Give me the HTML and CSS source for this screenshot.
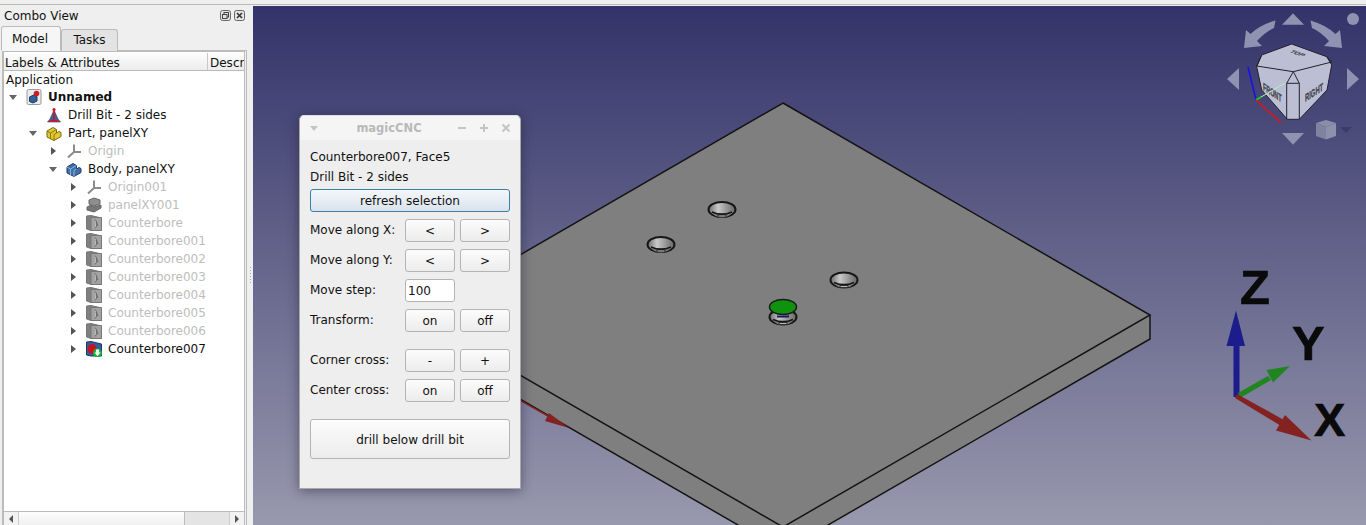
FILE: index.html
```html
<!DOCTYPE html>
<html lang="en">
<head>
<meta charset="UTF-8">
<meta name="viewport" content="width=device-width, initial-scale=1.0">
<title>magicCNC</title>
<link rel="stylesheet" href="styles.css">
</head>
<body>
  <svg class="defs" width="0" height="0">
    <defs>
      <symbol id="i-origin" viewBox="0 0 16 16">
        <path d="M8 1.5V9M8 9L2 14.5M8 9H15" fill="none" stroke="currentColor" stroke-width="2"/>
      </symbol>
      <symbol id="i-body" viewBox="0 0 16 16">
        <path d="M1 6L7 2.5L10.5 4.5V8L13 6.5L15 7.5V11.5L8 15.5L1 12Z" fill="#3f6ea8" stroke="#1f3f66"/>
        <path d="M1 6L4.5 8L10.5 4.5M4.5 8V14M10.5 8L8 9.5V15.5" fill="none" stroke="#8fb4dc"/>
      </symbol>
      <symbol id="i-part" viewBox="0 0 16 16">
        <path d="M1 6L7 2.5L10.5 4.5V8L13 6.5L15 7.5V11.5L8 15.5L1 12Z" fill="#e3c92f" stroke="#7a6a10"/>
        <path d="M1 6L4.5 8L10.5 4.5M4.5 8V14M10.5 8L8 9.5V15.5" fill="none" stroke="#8a7814"/>
      </symbol>
      <symbol id="i-plane" viewBox="0 0 16 16">
        <path d="M3 3L8 1L14 3V7L8 9L3 7Z" fill="#8e8e8e" stroke="#666"/>
        <path d="M1 10L5 8L8 10L15 8V11L8 15L1 13Z" fill="#777" stroke="#666"/>
      </symbol>
      <symbol id="i-bore" viewBox="0 0 16 16">
        <path d="M0.5 1L5 0.5L15.5 3V15.5H5L0.5 14Z" fill="#7f7f7f" stroke="#777"/>
        <path d="M5 2.5H15.5V15.5H5Z" fill="#a2a2a2" stroke="#777"/>
        <path d="M9 4.5A4.5 5.5 0 0 1 9 13.5" fill="#bcbcbc" stroke="#666"/>
        <path d="M10 7L12 11" stroke="#666"/>
      </symbol>
      <symbol id="i-bore-on" viewBox="0 0 16 16">
        <path d="M0.5 1L5 0.5L15.5 3V15H5L0.5 14Z" fill="#2f5f9c" stroke="#1d3a60"/>
        <ellipse cx="6" cy="8" rx="4.5" ry="5" fill="#c51420"/>
        <circle cx="11.5" cy="12" r="4.5" fill="#19b33a"/>
        <path d="M10 8.5H13V11.5H14.5L11.5 15L8.5 11.5H10Z" fill="#fff"/>
      </symbol>
      <symbol id="i-doc" viewBox="0 0 16 16">
        <rect x="1" y="0.5" width="14" height="15" rx="1.5" fill="#ececec" stroke="#9a9a9a"/>
        <path d="M3.5 8L7.5 6L11 7.5V12L7 14L3.5 12.5Z" fill="#2f6099" stroke="#1c3c63"/>
        <circle cx="10.5" cy="4.5" r="2.8" fill="#d01c24"/>
      </symbol>
      <symbol id="i-drill" viewBox="0 0 16 16">
        <path d="M8 3L12 12L14.5 15H1.5L4 12Z" fill="#3e5f9c" stroke="#2a4474" stroke-width="0.6"/>
        <circle cx="8" cy="2.5" r="1.6" fill="#d8141c"/>
        <path d="M8 2V14M3 14H13" fill="none" stroke="#d8141c" stroke-width="1.6"/>
      </symbol>
      <symbol id="hole" viewBox="-15 -9 30 18">
        <ellipse cx="0" cy="0" rx="13.5" ry="7.5" fill="url(#holeFill)" stroke="#161616" stroke-width="2"/>
        <path d="M-12.5 1.5Q0 15 12.5 1.5Q0 7 -12.5 1.5Z" fill="#7f7f7f"/>
        <path d="M-10 2.5Q0 7 10 2.5" fill="none" stroke="#161616" stroke-width="1.8"/>
        <path d="M-4 5.5H4V7.5H-4Z" fill="#b8b8b8" stroke="#161616" stroke-width="0.8"/>
      </symbol>
      <linearGradient id="holeFill" x1="0" y1="0" x2="1" y2="0">
        <stop offset="0" stop-color="#6c6c6c"/>
        <stop offset="0.35" stop-color="#c8c8c8"/>
        <stop offset="0.7" stop-color="#929292"/>
        <stop offset="1" stop-color="#666666"/>
      </linearGradient>
    </defs>
  </svg>

  <div class="topline"></div>
  <div class="main">
    <div class="combo">
      <div class="combo-title">
        <span>Combo View</span>
        <span class="dock-btns">
          <svg width="11" height="11" viewBox="0 0 11 11"><rect x="0.5" y="0.5" width="10" height="10" rx="2" fill="#e4e4e4" stroke="#666"/><rect x="4" y="2.5" width="4.5" height="4.5" fill="none" stroke="#444"/><rect x="2.5" y="4.5" width="4.5" height="4" fill="#e4e4e4" stroke="#444"/></svg>
          <svg width="11" height="11" viewBox="0 0 11 11"><rect x="0.5" y="0.5" width="10" height="10" rx="2" fill="#e4e4e4" stroke="#666"/><path d="M3 3L8 8M8 3L3 8" stroke="#333" stroke-width="1.6"/></svg>
        </span>
      </div>
      <div class="tabs">
        <div class="tab active">Model</div>
        <div class="tab">Tasks</div>
      </div>
      <div class="pane">
        <div class="tree">
          <div class="tree-head">
            <div class="col-labels">Labels &amp; Attributes</div>
            <div class="col-descr">Descr</div>
          </div>
          <div class="rows">
            <div class="row app">Application</div>
            <div class="row lvl0 bold"><i class="arrow open"></i><svg class="ico"><use href="#i-doc"/></svg>Unnamed</div>
            <div class="row lvl1"><i class="arrow none"></i><svg class="ico"><use href="#i-drill"/></svg>Drill Bit - 2 sides</div>
            <div class="row lvl1"><i class="arrow open"></i><svg class="ico"><use href="#i-part"/></svg>Part, panelXY</div>
            <div class="row lvl2 off"><i class="arrow"></i><svg class="ico grey"><use href="#i-origin"/></svg>Origin</div>
            <div class="row lvl2"><i class="arrow open"></i><svg class="ico"><use href="#i-body"/></svg>Body, panelXY</div>
            <div class="row lvl3 off"><i class="arrow"></i><svg class="ico grey"><use href="#i-origin"/></svg>Origin001</div>
            <div class="row lvl3 off"><i class="arrow"></i><svg class="ico"><use href="#i-plane"/></svg>panelXY001</div>
            <div class="row lvl3 off"><i class="arrow"></i><svg class="ico"><use href="#i-bore"/></svg>Counterbore</div>
            <div class="row lvl3 off"><i class="arrow"></i><svg class="ico"><use href="#i-bore"/></svg>Counterbore001</div>
            <div class="row lvl3 off"><i class="arrow"></i><svg class="ico"><use href="#i-bore"/></svg>Counterbore002</div>
            <div class="row lvl3 off"><i class="arrow"></i><svg class="ico"><use href="#i-bore"/></svg>Counterbore003</div>
            <div class="row lvl3 off"><i class="arrow"></i><svg class="ico"><use href="#i-bore"/></svg>Counterbore004</div>
            <div class="row lvl3 off"><i class="arrow"></i><svg class="ico"><use href="#i-bore"/></svg>Counterbore005</div>
            <div class="row lvl3 off"><i class="arrow"></i><svg class="ico"><use href="#i-bore"/></svg>Counterbore006</div>
            <div class="row lvl3"><i class="arrow"></i><svg class="ico"><use href="#i-bore-on"/></svg>Counterbore007</div>
          </div>
          <div class="hscroll">
            <div class="sb-btn"><i class="sb-left"></i></div>
            <div class="sb-thumb"></div>
            <div class="sb-trough"></div>
            <div class="sb-btn"><i class="sb-right"></i></div>
          </div>
        </div>
      </div>
    </div>
    <div class="splitter"><div class="grip"></div></div>

    <div class="view">
      <svg class="scene" viewBox="253 6 1113 519" width="1113" height="519">
        <defs>
          <linearGradient id="sky" x1="0" y1="0" x2="0" y2="1">
            <stop offset="0" stop-color="#33336a"/>
            <stop offset="1" stop-color="#9898ae"/>
          </linearGradient>
        </defs>
        <rect x="253" y="6" width="1113" height="519" fill="url(#sky)"/>

        <!-- plate -->
        <path d="M783 103L1150 315V339L783 551L416 339V315Z" fill="#7f7f7f"/>
        <path d="M783 103L1150 315L783 527L416 315Z M416 315V339L783 551L1150 339V315" fill="none" stroke="#141414" stroke-width="1.5"/>
        <use href="#hole" x="707" y="200.5" width="30" height="18"/>
        <use href="#hole" x="646" y="235.5" width="30" height="18"/>
        <use href="#hole" x="829" y="271" width="30" height="18"/>
        <use href="#hole" x="768" y="308" width="30" height="18"/>
        <ellipse cx="783" cy="307" rx="13.5" ry="7.5" fill="#0f930f" stroke="#1c1c1c" stroke-width="1.5"/>
        <path d="M777 315.5H789V317.5H777Z" fill="#16165a"/>

        <!-- red axis going under the dialog -->
        <path d="M500 389L548 416" stroke="#842222" stroke-width="1.5"/>
        <path d="M549 413L569 428L545 421Z" fill="#842222"/>

        <!-- corner triad -->
        <path d="M1233.5 397V345H1239.5V397Z" fill="#1c1c8c"/>
        <path d="M1226.5 346H1245L1236 310.5Z" fill="#1c1c8c"/>
        <path d="M1238 393L1268 376L1271 380L1240 398Z" fill="#1f851f"/>
        <path d="M1266.5 370L1290 366L1273 382.5Z" fill="#1f851f"/>
        <path d="M1235 398L1237 394L1284 420L1281 426Z" fill="#842222"/>
        <path d="M1285 415L1311.5 440.5L1276 430.5Z" fill="#842222"/>
        <text class="axis" x="1240" y="304">Z</text>
        <text class="axis" x="1292" y="360">Y</text>
        <text class="axis x-label" x="1314" y="436">X</text>

        <!-- navigation cube -->
        <g fill="#8f92b0">
          <path d="M1282 24.7H1304L1293 13.3Z"/>
          <path d="M1282 133H1304L1293 144.7Z"/>
          <path d="M1239 68V90L1227 79Z"/>
          <path d="M1347 68V90L1359 79Z"/>
          <circle cx="1353" cy="19" r="6"/>
          <path d="M1275.5 20.5Q1260 25 1250.5 34L1246 30L1244 48L1262 46L1257 41Q1265 32 1274 28Z"/>
          <path d="M1310.5 20.5Q1326 25 1335.5 34L1340 30L1342 48L1324 46L1329 41Q1321 32 1312 28Z"/>
        </g>
        <path d="M1316 123L1326 120L1336 123L1326 127Z" fill="#8b8ea9"/>
        <path d="M1316 123L1326 127V139.5L1316 136Z" fill="#80839f"/>
        <path d="M1336 123L1326 127V139.5L1336 136Z" fill="#8e91ac"/>
        <path d="M1340 127H1352L1346 132.7Z" fill="#3c3c66"/>
        <path d="M1261.7 55L1291.7 44L1326.7 56.7L1331.7 65L1327 90L1299.3 119.3H1287.3L1261.7 90L1256.7 66.7Z" fill="#bcbfd3" stroke="#22222e" stroke-width="1"/>
        <path d="M1261.7 55L1256.7 66L1293.3 71.7L1331.7 62L1326.7 56.7M1293.3 71.7L1286.7 83.3V119.3M1293.3 71.7L1299.3 83.3V119.3M1286.7 83.3H1299.3" fill="none" stroke="#22222e" stroke-width="1"/>
        <text class="cube-label" transform="matrix(0.6 0.4 0 1.2 1263 90)">FRONT</text>
        <text class="cube-label" transform="matrix(0.65 -0.42 0 1.2 1305 102)">RIGHT</text>
        <text class="cube-label small" transform="matrix(0.7 0.25 -0.7 0.3 1289 52)">TOP</text>
        <path d="M1256 100L1248 67" stroke="#1414e6" stroke-width="1.6"/>
        <path d="M1256 100L1285 83" stroke="#b4f0b4" stroke-width="1"/>
        <path d="M1256 100L1261 97" stroke="#14d014" stroke-width="2"/>
        <path d="M1256 100L1281 122.7" stroke="#e01414" stroke-width="1.6"/>
      </svg>

      <div class="dialog">
        <div class="dlg-title">
          <svg class="tb-ico" width="10" height="10" viewBox="0 0 10 10"><path d="M1 3H9L5 8Z" fill="#c4c4c4"/></svg>
          <span class="dlg-name">magicCNC</span>
          <span class="tb-btns">
            <svg width="10" height="10" viewBox="0 0 10 10"><path d="M1 5H9" stroke="#c4c4c4" stroke-width="2"/></svg>
            <svg width="10" height="10" viewBox="0 0 10 10"><path d="M1 5H9M5 1V9" stroke="#c4c4c4" stroke-width="2"/></svg>
            <svg width="10" height="10" viewBox="0 0 10 10"><path d="M1.5 1.5L8.5 8.5M8.5 1.5L1.5 8.5" stroke="#c4c4c4" stroke-width="2"/></svg>
          </span>
        </div>
        <div class="dlg-body">
          <div class="info">Counterbore007, Face5</div>
          <div class="info">Drill Bit - 2 sides</div>
          <button class="btn refresh">refresh selection</button>
          <div class="ctl first"><span class="lbl">Move along X:</span><button class="btn">&lt;</button><button class="btn">&gt;</button></div>
          <div class="ctl"><span class="lbl">Move along Y:</span><button class="btn">&lt;</button><button class="btn">&gt;</button></div>
          <div class="ctl"><span class="lbl">Move step:</span><input class="step" value="100"></div>
          <div class="ctl"><span class="lbl">Transform:</span><button class="btn">on</button><button class="btn">off</button></div>
          <div class="ctl gap"><span class="lbl">Corner cross:</span><button class="btn">-</button><button class="btn">+</button></div>
          <div class="ctl"><span class="lbl">Center cross:</span><button class="btn">on</button><button class="btn">off</button></div>
          <button class="btn drill">drill below drill bit</button>
        </div>
      </div>
    </div>
  </div>
</body>
</html>
```

FILE: styles.css
```css
html, body {
  margin: 0;
  height: 525px;
  overflow: hidden;
}
body {
  font-family: "DejaVu Sans", sans-serif;
  font-size: 12px;
  color: #111;
  background-color: #efefef;
}
.defs {
  display: block;
  height: 0;
}
.topline {
  height: 4px;
  background-color: #efefef;
  border-bottom: 1px solid #b8b8b8;
  margin-bottom: 1px;
}
.main {
  display: flex;
  height: 519px;
}

/* left dock */
.combo {
  width: 247px;
  display: flex;
  flex-direction: column;
}
.combo-title {
  height: 20px;
  display: flex;
  align-items: center;
  justify-content: space-between;
  padding-left: 4px;
}
.dock-btns {
  display: flex;
  gap: 3px;
  margin-top: -1px;
  margin-right: 2px;
}
.dock-btns svg {
  display: block;
}
.tabs {
  display: flex;
  height: 25px;
  align-items: flex-end;
  padding-left: 1px;
  margin-bottom: -1px;
  position: relative;
}
.tab {
  width: 57px;
  height: 22px;
  line-height: 21px;
  text-align: center;
  background-color: #e3e3e3;
  border: 1px solid #bbb;
  border-bottom: none;
  border-radius: 3px 3px 0 0;
  box-sizing: border-box;
}
.tab.active {
  width: 60px;
  height: 25px;
  line-height: 25px;
  padding-right: 2px;
  background-color: #f6f6f6;
  border-bottom: 1px solid #f6f6f6;
}
.pane {
  flex: 1;
  min-height: 0;
  margin-left: 2px;
  border: 1px solid #bbb;
  border-bottom: none;
  padding-right: 1px;
}
.tree {
  height: 100%;
  border: 1px solid #bbb;
  border-bottom: none;
  background-color: #fff;
  display: flex;
  flex-direction: column;
  box-sizing: border-box;
}
.tree-head {
  display: flex;
  height: 18px;
  line-height: 20px;
  background: linear-gradient(#fdfdfd, #ececec);
  border-bottom: 1px solid #bbb;
  box-sizing: border-box;
  margin-top: 1px;
}
.col-labels {
  width: 204px;
  padding-left: 1px;
  box-sizing: border-box;
  border-right: 1px solid #c8c8c8;
}
.col-descr {
  flex: 1;
  padding-left: 2px;
  overflow: hidden;
}
.rows {
  flex: 1;
  min-height: 0;
}
.row {
  height: 18px;
  display: flex;
  align-items: center;
  white-space: nowrap;
}
.row.app {
  padding-left: 2px;
  height: 17px;
}
.row.bold {
  font-weight: bold;
}
.row.off {
  color: #bdbdbd;
}
.lvl0 { padding-left: 5px; }
.lvl1 { padding-left: 25px; }
.lvl2 { padding-left: 45px; }
.lvl3 { padding-left: 65px; }
.arrow {
  width: 0;
  height: 0;
  margin-left: 2px;
  margin-right: 10px;
  border-style: solid;
  border-width: 4px 0 4px 5px;
  border-color: transparent transparent transparent #555;
}
.arrow.open {
  margin-left: 0;
  margin-right: 9px;
  margin-top: 1px;
  border-width: 5px 4.5px 0 4.5px;
  border-color: #666 transparent transparent transparent;
}
.arrow.none {
  border-color: transparent;
}
.ico {
  width: 16px;
  height: 16px;
  flex: none;
  margin-right: 6px;
}
.ico.grey {
  color: #8c8c8c;
}
.hscroll {
  height: 13px;
  display: flex;
  border-top: 1px solid #bbb;
  margin-top: auto;
}
.sb-btn {
  width: 14px;
  display: flex;
  align-items: center;
  justify-content: center;
  background-color: #f2f2f2;
}
.sb-left, .sb-right {
  width: 0;
  height: 0;
  border-style: solid;
  border-width: 4px 4px 4px 0;
  border-color: transparent #555 transparent transparent;
}
.sb-right {
  border-width: 4px 0 4px 4px;
  border-color: transparent transparent transparent #555;
}
.sb-thumb {
  width: 167px;
  background: linear-gradient(#fdfdfd, #f0f0f0);
  border-left: 1px solid #ccc;
  border-right: 1px solid #bbb;
  box-sizing: border-box;
}
.sb-trough {
  flex: 1;
  background-color: #e4e4e4;
  border-right: 1px solid #ccc;
}
.splitter {
  width: 6px;
  display: flex;
  align-items: center;
  justify-content: center;
}
.grip {
  width: 1px;
  height: 17px;
  margin-top: 20px;
  background: repeating-linear-gradient(#aaa 0 1px, transparent 1px 3px);
}

/* 3d view */
.view {
  flex: 1;
  position: relative;
  overflow: hidden;
}
.scene {
  display: block;
}
.axis {
  font-family: "Liberation Sans", sans-serif;
  font-weight: bold;
  font-size: 49px;
  fill: #0a0a0a;
  stroke: #0a0a0a;
  stroke-width: 0.6px;
}
.axis.x-label {
  font-size: 47px;
}
.cube-label {
  font-family: "Liberation Sans", sans-serif;
  font-weight: bold;
  font-size: 9px;
  fill: #45454f;
  stroke: #45454f;
  stroke-width: 0.3px;
}
.cube-label.small {
  font-size: 9px;
}

/* floating dialog */
.dialog {
  position: absolute;
  left: 46px;
  top: 109px;
  width: 222px;
  height: 374px;
  background-color: #eeeeee;
  border: 1px solid #a8a8a8;
  border-top-color: #e0e0e0;
  border-radius: 5px 5px 0 0;
  box-sizing: border-box;
  box-shadow: 0 2px 12px rgba(20, 20, 40, 0.45);
}
.dlg-title {
  height: 24px;
  display: flex;
  align-items: center;
  background-color: #f5f5f5;
  border-radius: 5px 5px 0 0;
  padding: 0 9px;
}
.dlg-name {
  flex: 1;
  text-align: center;
  font-weight: bold;
  font-size: 11.5px;
  color: #b9b9b9;
  margin-left: 2px;
}
.tb-btns {
  display: flex;
  gap: 12px;
}
.dlg-body {
  padding: 7px 10px 0 10px;
  display: flex;
  flex-direction: column;
}
.info {
  height: 20px;
  line-height: 20px;
}
.btn {
  font-family: inherit;
  font-size: 12px;
  color: #111;
  width: 50px;
  height: 23px;
  padding: 0;
  background: linear-gradient(#fcfcfc, #ececec);
  border: 1px solid #b4b4b4;
  border-radius: 3px;
}
.btn.refresh {
  width: 200px;
  height: 23px;
  margin-top: 2px;
  background: linear-gradient(#f4f7fa, #d9e3ec);
  border-color: #3d7ea8;
}
.btn.drill {
  width: 200px;
  height: 40px;
  margin-top: 17px;
  padding-top: 2px;
}
.ctl {
  display: flex;
  gap: 5px;
  height: 23px;
  align-items: center;
  margin-top: 7px;
}
.ctl.first {
  margin-top: 7px;
}
.ctl.gap {
  margin-top: 17px;
}
.lbl {
  width: 90px;
  margin-top: -2px;
}
.step {
  font-family: inherit;
  font-size: 12px;
  width: 50px;
  height: 23px;
  padding: 0 2px;
  box-sizing: border-box;
  border: 1px solid #b4b4b4;
  border-radius: 3px;
  background-color: #fff;
  color: #111;
}
```
